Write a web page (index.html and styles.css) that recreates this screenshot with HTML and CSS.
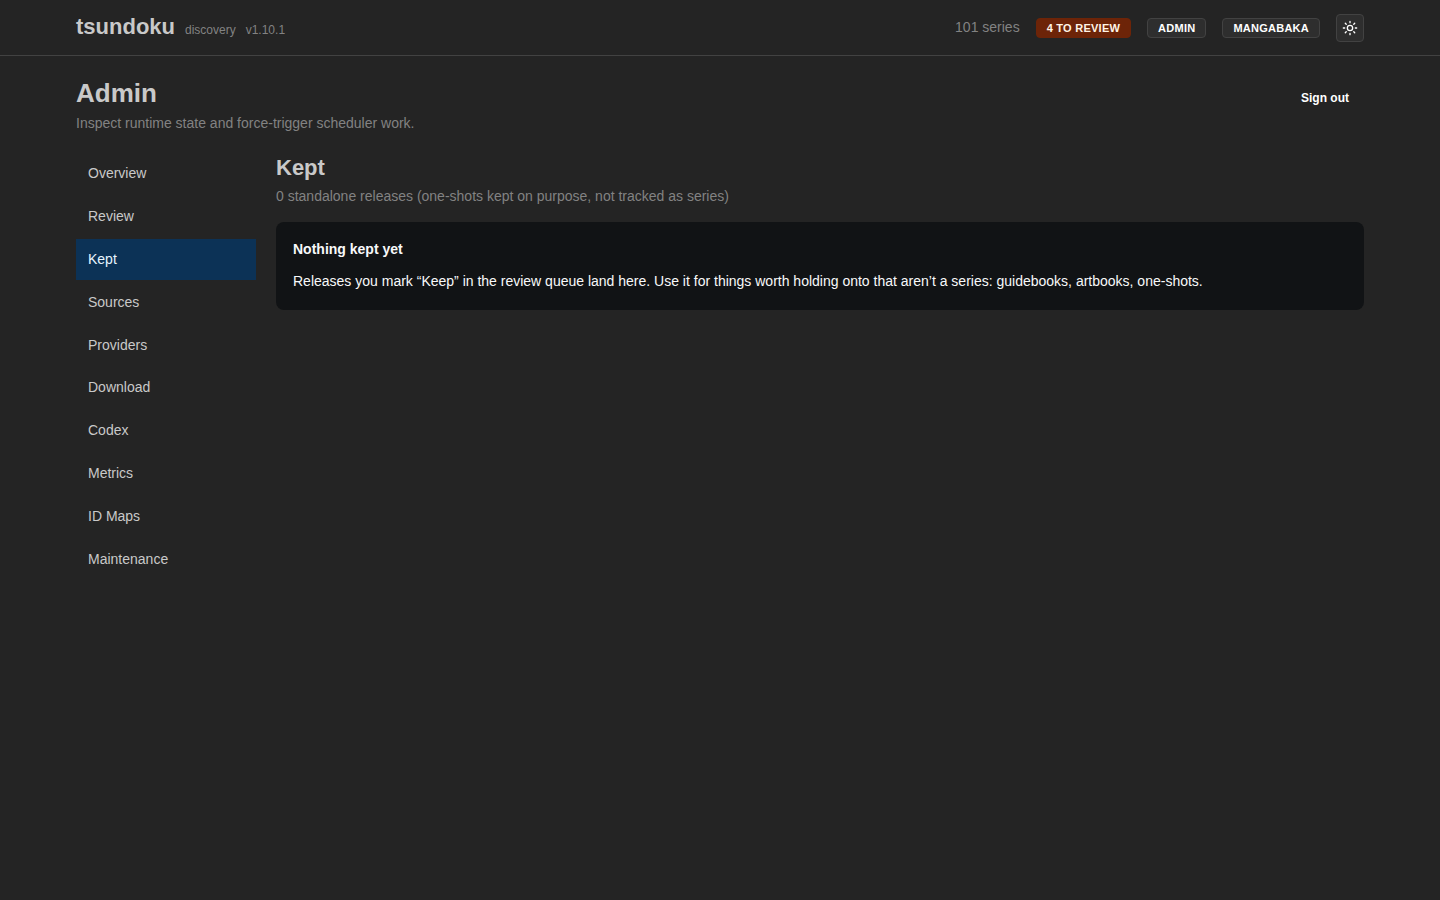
FILE: index.html
```html
<!DOCTYPE html>
<html lang="en">
<head>
  <meta charset="UTF-8">
  <meta name="viewport" content="width=device-width, initial-scale=1.0">
  <title>tsundoku - Kept</title>
  <link rel="stylesheet" href="styles.css">
</head>
<body>
  <header class="site-header">
    <div class="container header-row">
      <div class="brand">
        <a href="/" class="brand-name">tsundoku</a>
        <span class="brand-note">discovery</span>
        <span class="brand-note">v1.10.1</span>
      </div>
      <div class="header-actions">
        <span class="series-count">101 series</span>
        <a href="/admin/review" class="badge badge-review">4 to review</a>
        <a href="/admin" class="badge">Admin</a>
        <a href="#" class="badge">MangaBaka</a>
        <button type="button" class="theme-toggle" aria-label="Toggle color scheme">
          <svg width="16" height="16" viewBox="0 0 24 24" fill="none" stroke="currentColor" stroke-width="2" stroke-linecap="round" stroke-linejoin="round">
            <circle cx="12" cy="12" r="4"/>
            <path d="M12 2v2M12 20v2M4.93 4.93l1.41 1.41M17.66 17.66l1.41 1.41M2 12h2M20 12h2M6.34 17.66l-1.41 1.41M19.07 4.93l-1.41 1.41"/>
          </svg>
        </button>
      </div>
    </div>
  </header>

  <main class="container">
    <div class="page-head">
      <div>
        <h1>Admin</h1>
        <p class="dimmed">Inspect runtime state and force-trigger scheduler work.</p>
      </div>
      <button type="button" class="sign-out">Sign out</button>
    </div>

    <div class="admin-layout">
      <nav class="admin-nav">
        <a href="/admin">Overview</a>
        <a href="/admin/review">Review</a>
        <a href="/admin/kept" class="active">Kept</a>
        <a href="/admin/sources">Sources</a>
        <a href="/admin/providers">Providers</a>
        <a href="/admin/download">Download</a>
        <a href="/admin/codex">Codex</a>
        <a href="/admin/metrics">Metrics</a>
        <a href="/admin/id-maps">ID Maps</a>
        <a href="/admin/maintenance">Maintenance</a>
      </nav>

      <section class="admin-content">
        <h2>Kept</h2>
        <p class="dimmed">0 standalone releases (one-shots kept on purpose, not tracked as series)</p>
        <div class="notice">
          <p class="notice-title">Nothing kept yet</p>
          <p>Releases you mark “Keep” in the review queue land here. Use it for things worth holding onto that aren’t a series: guidebooks, artbooks, one-shots.</p>
        </div>
      </section>
    </div>
  </main>
</body>
</html>
```

FILE: styles.css
```css
* {
  box-sizing: border-box;
}
body {
  margin: 0;
  font-family: "Liberation Sans", Arial, sans-serif;
  font-size: 14px;
  line-height: 1.55;
  background-color: #242424;
  color: #c9c9c9;
}
h1, h2, p {
  margin: 0;
}
a {
  color: inherit;
  text-decoration: none;
}
button {
  font-family: inherit;
  cursor: pointer;
}
.container {
  max-width: 1320px;
  margin: 0 auto;
  padding: 0 16px;
}
.dimmed {
  color: #828282;
}

/* Header */
.site-header {
  height: 56px;
  border-bottom: 1px solid #424242;
}
.header-row {
  display: flex;
  justify-content: space-between;
  align-items: center;
  height: 55px;
}
.brand {
  display: flex;
  align-items: baseline;
  gap: 10px;
  padding-bottom: 2px;
}
.brand-name {
  font-size: 22px;
  font-weight: bold;
  line-height: 30px;
}
.brand-note {
  font-size: 12px;
  color: #828282;
}
.header-actions {
  display: flex;
  align-items: center;
  gap: 16px;
}
.series-count {
  color: #828282;
}
.badge {
  height: 20px;
  padding: 0 10px;
  border: 1px solid #424242;
  border-radius: 4px;
  background-color: #2e2e2e;
  color: #fff;
  font-size: 11px;
  font-weight: bold;
  line-height: 18px;
  letter-spacing: 0.25px;
  text-transform: uppercase;
}
.badge-review {
  border-color: #6d2408;
  background-color: #6d2408;
  color: #fff4e6;
}
.theme-toggle {
  display: flex;
  align-items: center;
  justify-content: center;
  width: 28px;
  height: 28px;
  padding: 0;
  border: 1px solid #424242;
  border-radius: 4px;
  background-color: #2e2e2e;
  color: #fff;
}

/* Page title */
.page-head {
  display: flex;
  justify-content: space-between;
  align-items: center;
  padding: 20px 0 18.9px;
}
h1 {
  font-size: 26px;
  line-height: 1.35;
}
.page-head .dimmed {
  margin-top: 1.75px;
}
.sign-out {
  height: 30px;
  margin-bottom: 15px;
  padding: 0 15px;
  border: none;
  background: none;
  color: #fff;
  font-size: 12px;
  font-weight: bold;
}

/* Sidebar and content */
.admin-layout {
  display: grid;
  grid-template-columns: 180px 1fr;
  gap: 20px;
}
.admin-nav {
  display: flex;
  flex-direction: column;
  gap: 2px;
}
.admin-nav a {
  padding: 8px 12px;
  line-height: 24.8px;
}
.admin-nav a:hover {
  background-color: #2e2e2e;
}
.admin-nav .active {
  background-color: #0c3256;
  color: #e7f5ff;
}
h2 {
  margin-bottom: 2.6px;
  font-size: 22px;
  line-height: 1.35;
}
.notice {
  margin-top: 15px;
  padding: 17px;
  border-radius: 8px;
  background-color: #111315;
  color: #f8f9fa;
}
.notice-title {
  margin-bottom: 10px;
  font-weight: bold;
}
```
